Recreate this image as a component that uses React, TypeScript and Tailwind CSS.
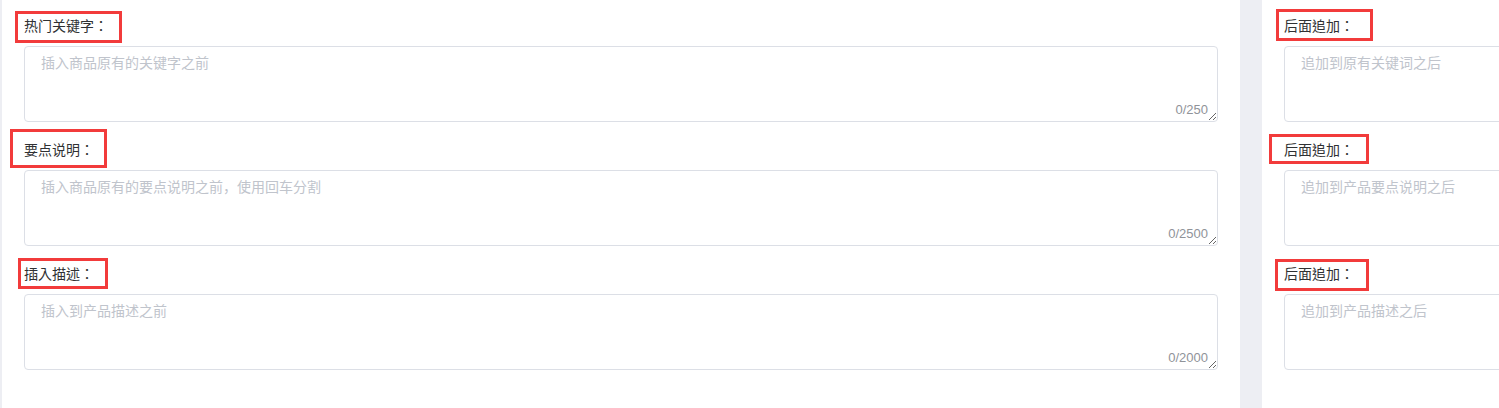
import React from "react";

type Field = {
  label: string;
  placeholder: string;
  max?: number;
  // 標注用の赤枠（ラベル基準のオフセット）
  mark: { left: number; top: number; width: number; height: number };
};

const leftFields: Field[] = [
  {
    label: "热门关键字：",
    placeholder: "插入商品原有的关键字之前",
    max: 250,
    mark: { left: -9, top: 11, width: 107, height: 32 },
  },
  {
    label: "要点说明：",
    placeholder: "插入商品原有的要点说明之前，使用回车分割",
    max: 2500,
    mark: { left: -14, top: 5, width: 97, height: 39 },
  },
  {
    label: "插入描述：",
    placeholder: "插入到产品描述之前",
    max: 2000,
    mark: { left: -6, top: 10, width: 90, height: 31 },
  },
];

const rightFields: Field[] = [
  {
    label: "后面追加：",
    placeholder: "追加到原有关键词之后",
    mark: { left: -8, top: 9, width: 97, height: 32 },
  },
  {
    label: "后面追加：",
    placeholder: "追加到产品要点说明之后",
    mark: { left: -15, top: 10, width: 100, height: 30 },
  },
  {
    label: "后面追加：",
    placeholder: "追加到产品描述之后",
    mark: { left: -9, top: 11, width: 94, height: 32 },
  },
];

export default function App() {
  return (
    <div
      className="h-[408px] w-[1499px] overflow-hidden bg-[#edeef3] flex pl-[2px] gap-[22px]"
      style={{ fontFamily: '"Liberation Sans", "Noto Sans CJK SC", sans-serif' }}
    >
      {/* 左パネル */}
      <div className="w-[1238px] shrink-0 bg-white px-[22px] flex flex-col gap-[2px]">
        {leftFields.map((f, i) => (
          <FieldRow key={i} field={f} />
        ))}
      </div>

      {/* 右パネル */}
      <div className="w-[1238px] shrink-0 bg-white px-[22px] flex flex-col gap-[2px]">
        {rightFields.map((f, i) => (
          <FieldRow key={i} field={f} />
        ))}
      </div>
    </div>
  );
}

function FieldRow({ field }: { field: Field }) {
  return (
    <div className="relative pt-[15px]">
      <div className="h-5 leading-5 text-sm text-[#303133] font-['Noto_Sans_CJK_TC',sans-serif]">
        {field.label}
      </div>
      <div className="relative mt-[11px]">
        <textarea
          placeholder={field.placeholder}
          maxLength={field.max}
          className="block w-full h-[76px] border border-[#dcdfe6] rounded-[4px] pl-[16px] pr-[15px] pt-[6px] pb-[5px] text-sm leading-[1.5] text-[#606266] placeholder:text-[#c0c4cc] outline-none resize-y"
        />
        {field.max && (
          <span className="absolute right-[10px] bottom-[5px] bg-white text-[13px] leading-[15px] text-[#909399]">
            0/{field.max}
          </span>
        )}
      </div>
      <div
        className="absolute border-[3px] border-[#f23b3b] pointer-events-none"
        style={{
          left: field.mark.left,
          top: field.mark.top,
          width: field.mark.width,
          height: field.mark.height,
        }}
      />
    </div>
  );
}
